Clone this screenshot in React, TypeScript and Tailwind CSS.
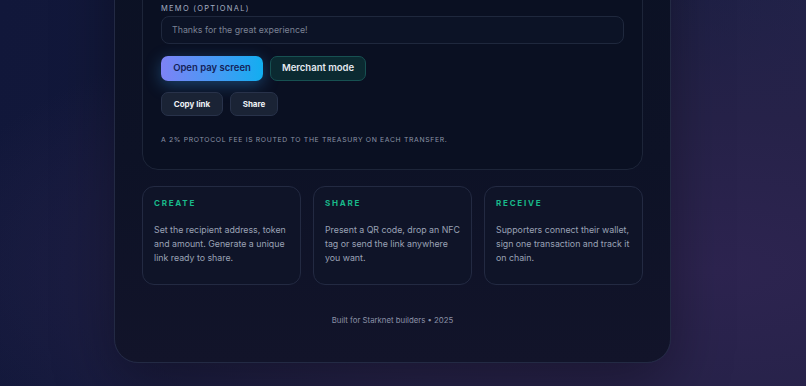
import React from "react";

const steps = [
  {
    title: "Create",
    body: "Set the recipient address, token and amount. Generate a unique link ready to share.",
  },
  {
    title: "Share",
    body: "Present a QR code, drop an NFC tag or send the link anywhere you want.",
  },
  {
    title: "Receive",
    body: "Supporters connect their wallet, sign one transaction and track it on chain.",
  },
];

export default function App() {
  return (
    <div
      className="h-[386px] w-full overflow-hidden flex flex-col justify-end pb-[23px] bg-[radial-gradient(ellipse_at_88%_70%,#2d2450_0%,#262249_40%,transparent_80%),linear-gradient(100deg,#11173a_0%,#141a3c_45%,#22234a_100%)]"
      style={{ fontFamily: "Inter, 'Liberation Sans', sans-serif" }}
    >
      <div className="ml-[114px] w-[557px] shrink-0 rounded-[24px] border border-[#232a44] bg-[linear-gradient(180deg,#0b1123_0%,#0d1226_60%,#12142a_100%)] px-[27px] pb-[36px] shadow-[0_20px_60px_rgba(0,0,0,0.35)]">
        {/* form card */}
        <div className="rounded-[16px] border border-[#1d2539] bg-[#0a1022] px-[18px] pt-6 pb-[24px]">
          <div className="flex flex-col gap-3 mb-[16px]">
            <label className="text-[7.5px] uppercase tracking-[0.16em] text-[#a3acc0]">Recipient</label>
            <div className="h-[28px] rounded-[8px] border border-[#1f283d] bg-[#0c1326]" />
            <label className="text-[7.5px] uppercase tracking-[0.16em] text-[#a3acc0]">Amount</label>
            <div className="h-[28px] rounded-[8px] border border-[#1f283d] bg-[#0c1326]" />
          </div>

          <div className="text-[7.5px] leading-[10px] uppercase tracking-[0.17em] text-[#a3acc0]">
            Memo (optional)
          </div>
          <div className="mt-[2px] h-[28px] rounded-[8px] border border-[#1f283d] bg-[#0c1326] flex items-center px-[10px] text-[8.8px] text-[#7b8294]">
            Thanks for the great experience!
          </div>

          <div className="mt-[12px] flex gap-[7px]">
            <button className="h-[25px] w-[102px] rounded-[7px] bg-[linear-gradient(90deg,#7e82f6_0%,#3f9df4_60%,#12aef0_100%)] text-[9.5px] font-semibold text-[#141f58] shadow-[0_4px_16px_rgba(56,160,245,0.35)]">
              Open pay screen
            </button>
            <button className="h-[25px] w-[96px] rounded-[7px] border border-[#175152] bg-[#0b2a31] text-[9.5px] font-semibold text-[#e4e9f0]">
              Merchant mode
            </button>
          </div>

          <div className="mt-[11px] flex gap-[7px]">
            <button className="h-[24px] w-[62px] rounded-[7px] border border-[#28324a] bg-[#1a2335] text-[8px] font-bold text-[#eef1f6]">
              Copy link
            </button>
            <button className="h-[24px] w-[48px] rounded-[7px] border border-[#28324a] bg-[#1a2335] text-[8px] font-bold text-[#eef1f6]">
              Share
            </button>
          </div>

          <p className="mt-[19px] text-[6.8px] leading-[10px] uppercase tracking-[0.1em] text-[#8d95a8]">
            A 2% protocol fee is routed to the treasury on each transfer.
          </p>
        </div>

        {/* steps */}
        <div className="mt-[16px] grid grid-cols-3 gap-[12px]">
          {steps.map((s) => (
            <div
              key={s.title}
              className="h-[99px] rounded-[12px] border border-[#232a42] bg-[#0f1428] px-[11px] pt-[11px]"
            >
              <div className="text-[8px] leading-[10px] font-bold uppercase tracking-[0.22em] text-[#19b98a]">
                {s.title}
              </div>
              <p className="mt-[15px] text-[8.8px] leading-[14px] text-[#9aa2b5]">{s.body}</p>
            </div>
          ))}
        </div>

        <p className="mt-[29px] text-center text-[7.8px] leading-[12px] text-[#8a91a6]">
          Built for Starknet builders • 2025
        </p>
      </div>
    </div>
  );
}
